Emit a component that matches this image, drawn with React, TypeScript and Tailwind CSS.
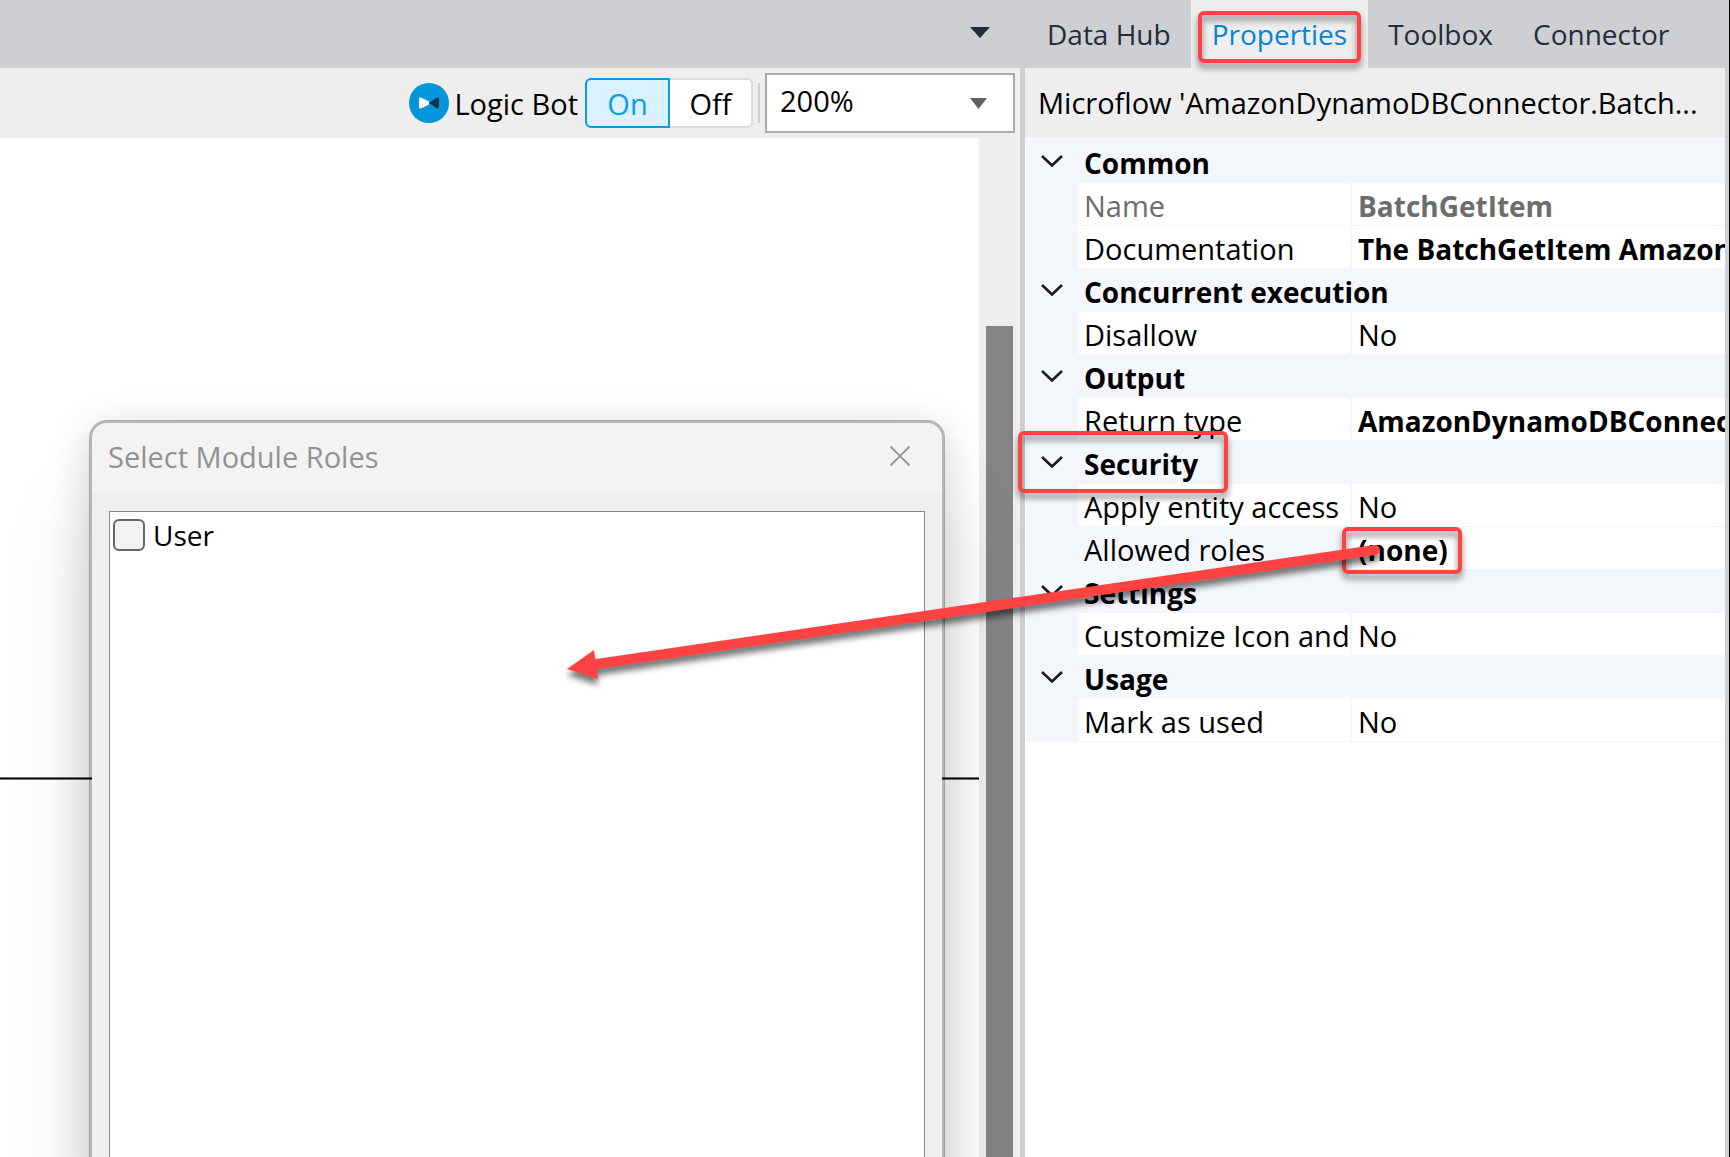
import type { ReactNode } from "react";

type Property = { label: string; value: string; bold?: boolean; muted?: boolean; selected?: boolean };
type Section = { title: string; marked?: boolean; rows: Property[] };

const sections: Section[] = [
  {
    title: "Common",
    rows: [
      { label: "Name", value: "BatchGetItem", bold: true, muted: true },
      { label: "Documentation", value: "The BatchGetItem Amazon", bold: true },
    ],
  },
  { title: "Concurrent execution", rows: [{ label: "Disallow", value: "No" }] },
  { title: "Output", rows: [{ label: "Return type", value: "AmazonDynamoDBConnec", bold: true }] },
  {
    title: "Security",
    marked: true,
    rows: [
      { label: "Apply entity access", value: "No" },
      { label: "Allowed roles", value: "(none)", bold: true, selected: true },
    ],
  },
  { title: "Settings", rows: [{ label: "Customize Icon and", value: "No" }] },
  { title: "Usage", rows: [{ label: "Mark as used", value: "No" }] },
];

function Marker({ className }: { className: string }) {
  return (
    <span
      aria-hidden="true"
      className={`pointer-events-none absolute z-20 rounded-md border-4 border-[#ff4343] drop-shadow-[0_5px_3px_rgba(0,0,0,0.5)] ${className}`}
    />
  );
}

function Chevron() {
  return (
    <svg className="h-3 w-[22px]" viewBox="0 0 22 12" fill="none" stroke="#1b1b1b" strokeWidth="2.600" aria-hidden="true">
      <path d="M1 1 11 10.500 21 1" />
    </svg>
  );
}

function Arrow() {
  return (
    <svg
      className="pointer-events-none absolute top-0 right-[346px] z-30 h-[160px] w-[820px] overflow-visible drop-shadow-[0_6px_3px_rgba(0,0,0,0.55)]"
      viewBox="0 0 820 160"
      aria-hidden="true"
    >
      <path d="M38 137 816 23" stroke="#ff4343" strokeWidth="10" strokeLinecap="round" />
      <path d="M8 142 35 123 39 152Z" fill="#ff4343" />
    </svg>
  );
}

function Tab({ children, active }: { children: ReactNode; active?: boolean }) {
  return (
    <button
      type="button"
      role="tab"
      aria-selected={!!active}
      className={
        active
          ? "relative h-full bg-[#eeeeee] px-[21px] text-[#0585d8]"
          : "relative h-full px-5 text-[#252b3c]"
      }
    >
      {children}
      {active && <Marker className="inset-x-[7px] top-[11px] bottom-[5px]" />}
    </button>
  );
}

function Editor() {
  return (
    <main className="relative flex min-w-0 flex-1 flex-col">
      <div className="flex h-[68px] items-center justify-end bg-[#cecfd3] pr-[30px] pb-1">
        <button type="button" aria-label="Open documents" className="flex h-8 items-center">
          <svg className="h-[11px] w-5" viewBox="0 0 20 11" aria-hidden="true">
            <path d="M0 0H20L10 11Z" fill="#242b3b" />
          </svg>
        </button>
      </div>
      <div className="flex h-[70px] items-center justify-end bg-[#eeeeee] pr-[5px]">
        <svg className="h-10 w-10" viewBox="0 0 40 40" aria-hidden="true">
          <circle cx="20" cy="20" r="20" fill="#0595db" />
          <path d="M10 16Q10 14 12 14.500L20 18.500V21.500L12 25.500Q10 26 10 24Z" fill="#fff" />
          <path d="M30 16Q30 14 28 14.500L20 20 28 25.500Q30 26 30 24Z" fill="#0d3550" />
        </svg>
        <span className="mr-[7px] ml-[5px] pt-0.5">Logic Bot</span>
        <div role="group" aria-label="Logic Bot" className="flex h-[50px]">
          <button
            type="button"
            aria-pressed="true"
            className="w-[85px] rounded-l-md border-2 border-[#0a9bf0] bg-[#d9f2ff] pt-0.5 text-[#0a9bf0]"
          >
            On
          </button>
          <button
            type="button"
            aria-pressed="false"
            className="w-[83px] rounded-r-md border-2 border-l-0 border-[#dcdcdc] bg-white pt-0.5"
          >
            Off
          </button>
        </div>
        <div className="mx-[5px] h-10 w-0.5 bg-[#cfcfd1]" />
        <div className="relative">
          <select
            aria-label="Zoom"
            className="block h-[60px] w-[250px] appearance-none rounded-none border-2 border-[#ababab] bg-white pb-1 pl-[13px]"
          >
            <option>200%</option>
          </select>
          <svg
            className="pointer-events-none absolute top-[25px] right-7 h-[11px] w-[17px]"
            viewBox="0 0 17 11"
            aria-hidden="true"
          >
            <path d="M0 0H17L8.500 11Z" fill="#606060" />
          </svg>
        </div>
      </div>
      <div className="relative flex flex-1">
        <div className="flex-1 bg-white pt-[639px]">
          <div className="h-[3px] border-y border-[#777777] bg-black" />
        </div>
        <div className="flex w-[41px] bg-[#eeeeee] pt-[188px] pl-[7px]">
          <div className="w-[27px] bg-[#848484]" />
        </div>
        <ModuleRolesDialog />
      </div>
    </main>
  );
}

function ModuleRolesDialog() {
  return (
    <section
      role="dialog"
      aria-labelledby="roles-title"
      className="absolute top-[282px] right-[75px] -bottom-10 left-[89px] z-10 flex flex-col rounded-[18px] border-[3px] border-black/28 bg-[#efefef] bg-clip-padding shadow-[0_80px_90px_rgba(0,0,0,0.12),0_8px_40px_rgba(0,0,0,0.16)]"
    >
      <header className="flex h-[69px] items-center justify-between rounded-t-2xl bg-[#f3f3f3] pr-8 pb-0.5 pl-4 text-[#929292]">
        <h2 id="roles-title">Select Module Roles</h2>
        <button type="button" aria-label="Close" className="pb-0.5">
          <svg className="h-5 w-5" viewBox="0 0 20 20" stroke="#929292" strokeWidth="1.800" aria-hidden="true">
            <path d="M0.500 0.500 19.500 19.500M19.500 0.500 0.500 19.500" />
          </svg>
        </button>
      </header>
      <div className="mx-[17px] mt-[19px] flex-1 border border-[#828790] bg-white pt-[7px] pl-[3px]">
        <label className="flex h-8 w-fit items-center gap-2 text-[28px]">
          <input
            type="checkbox"
            className="h-8 w-8 appearance-none rounded-md border-2 border-[#666666] bg-[#f3f3f3]"
          />
          <span>User</span>
        </label>
      </div>
    </section>
  );
}

function PropertiesPanel() {
  return (
    <aside className="flex w-[710px] shrink-0 bg-[#cecfd3]">
      <div className="flex min-w-0 flex-1 flex-col">
        <div role="tablist" className="flex h-[68px] items-center bg-[#cecfd3] pl-[7px] text-[28px]">
          <Tab>Data Hub</Tab>
          <Tab active>Properties</Tab>
          <Tab>Toolbox</Tab>
          <Tab>Connector</Tab>
        </div>
        <div className="flex flex-1 flex-col border-l-[5px] border-[#cecfd3] bg-white">
          <h1 className="flex h-[70px] items-center bg-[#eeeeee] pl-[13px] whitespace-nowrap">
            Microflow 'AmazonDynamoDBConnector.Batch...
          </h1>
          <div className="pt-px pl-px">
            <table className="w-full table-fixed border-separate border-spacing-0 border-b border-[#f3f6fb]">
              <colgroup>
                <col className="w-[52px]" />
                <col className="w-[274px]" />
                <col />
              </colgroup>
              {sections.map((section) => (
                <tbody key={section.title} className="group">
                  <tr className="bg-[#f3f6fb]">
                    <td className="relative p-0 pl-[15px] align-top">
                      <button type="button" aria-label={section.title} className="flex h-[44px] items-center">
                        <Chevron />
                      </button>
                      {section.marked && <Marker className="-top-[9px] -left-2 h-[62px] w-[210px]" />}
                    </td>
                    <th colSpan={2} scope="colgroup" className="p-0 pt-[5px] pl-1.5 text-left text-[28px] font-bold">
                      <div className="h-[39px] leading-[38px]">{section.title}</div>
                    </th>
                  </tr>
                  {section.rows.map((row, index) => {
                    const divider = index < section.rows.length - 1 ? "border-b" : "";
                    return (
                      <tr key={row.label} className={row.muted ? "text-[#6d6d6d]" : ""}>
                        <td className="bg-[#f3f6fb] p-0" />
                        <th
                          scope="row"
                          className={`border-r-2 border-[#f3f6fb] p-0 pt-1 pl-1.5 text-left font-normal ${divider} ${
                            row.selected ? "bg-[#f3f6fb]" : "bg-white"
                          }`}
                        >
                          <div className="h-[38px] leading-[38px] whitespace-nowrap">{row.label}</div>
                        </th>
                        <td className={`relative border-[#f3f6fb] bg-white p-0 pt-1 pl-1.5 ${divider}`}>
                          <div
                            className={`h-[38px] overflow-hidden leading-[38px] whitespace-nowrap ${
                              row.bold ? "text-[28px] font-bold" : ""
                            }`}
                          >
                            {row.value}
                          </div>
                          {row.selected && (
                            <>
                              <Marker className="top-0 -left-2.5 h-[47px] w-[120px]" />
                              <Arrow />
                            </>
                          )}
                        </td>
                      </tr>
                    );
                  })}
                </tbody>
              ))}
            </table>
          </div>
        </div>
      </div>
      <div className="w-[5px] border-r border-black bg-[#cecfd3]" />
    </aside>
  );
}

export default function App() {
  return (
    <div className="flex h-screen w-full overflow-hidden bg-white font-['Open_Sans',sans-serif] text-[29px] leading-[38px] text-black">
      <Editor />
      <PropertiesPanel />
    </div>
  );
}
